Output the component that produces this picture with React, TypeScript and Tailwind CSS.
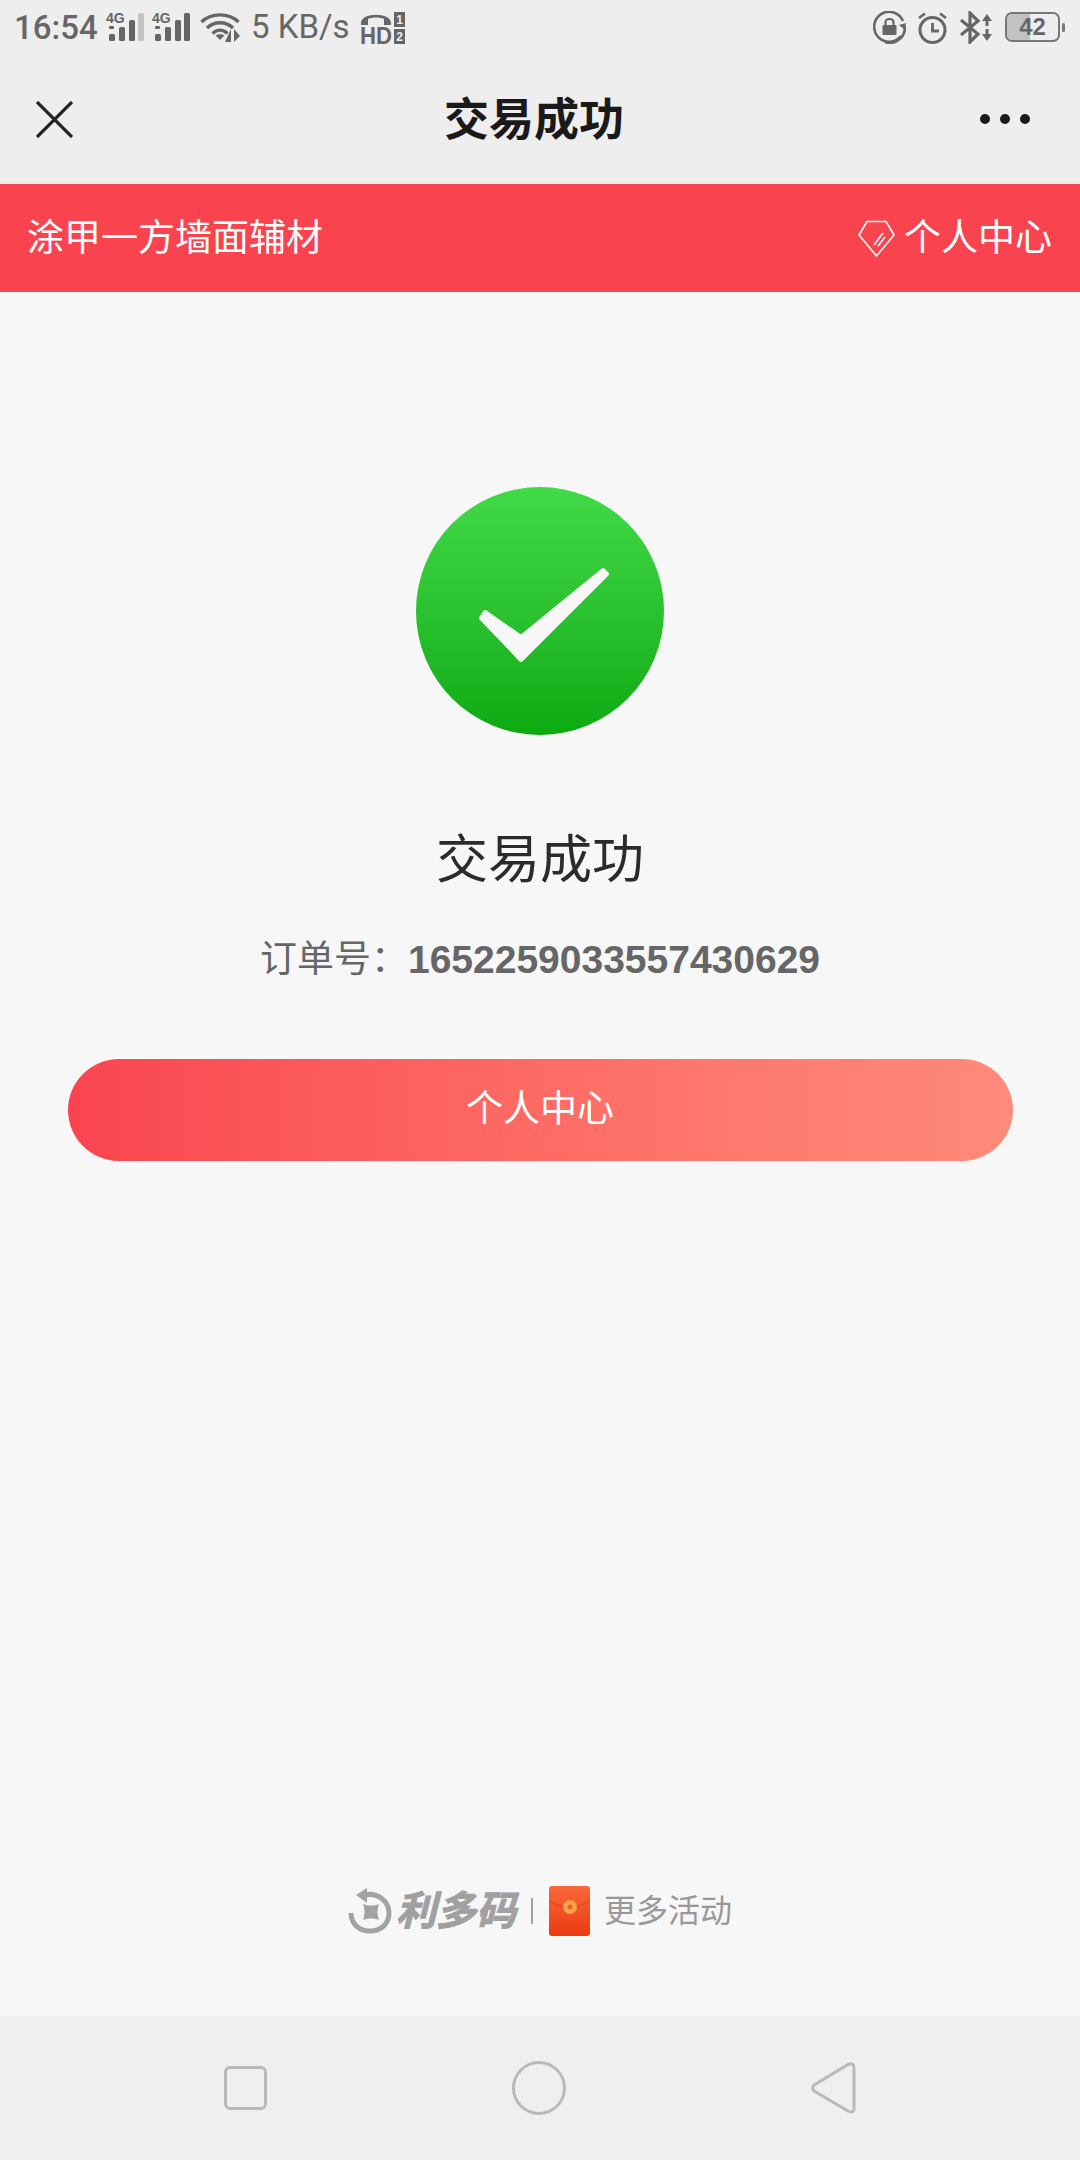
import React from "react";

const cjk = "font-['Liberation_Sans','Noto_Sans_CJK_SC',sans-serif]";

function Signal({ dim }: { dim?: boolean }) {
  return (
    <svg width="38" height="30" viewBox="0 0 38 30" className="block overflow-visible">
      <text x="0" y="11" fontSize="14" fontWeight="700" fill="#666" fontFamily="Liberation Sans, sans-serif">4G</text>
      <rect x="3" y="14" width="5" height="3" rx="1" fill="#666" />
      <rect x="3" y="22" width="6" height="7" rx="1.5" fill="#666" />
      <rect x="13" y="15" width="6" height="14" rx="1.5" fill="#666" />
      <rect x="23" y="8" width="6" height="21" rx="1.5" fill="#666" />
      <rect x="32" y="1" width="6" height="28" rx="1.5" fill={dim ? "#c4c4c4" : "#666"} />
    </svg>
  );
}

function Wifi() {
  return (
    <svg width="44" height="32" viewBox="0 0 44 32" className="block" fill="none" stroke="#666" strokeWidth="3.4">
      <path d="M1.5 11 C11 1.5 29 1.500 38.500 11" />
      <path d="M7 17 C14 10 26 10 33 17" />
      <path d="M12.500 22.500 C17 18 23 18 27.500 22.500" />
      <path d="M20 29 L15.500 24.500 C18 22.800 22 22.800 24.500 24.500 Z" fill="#666" stroke="none" />
      <path d="M31 18 V31 L25 31 Z" fill="#666" stroke="none" />
      <path d="M34 18 V31 L40 25 Z" fill="#666" stroke="none" />
    </svg>
  );
}

function Hd() {
  return (
    <svg width="45" height="33" viewBox="0 0 45 33" className="block overflow-visible">
      <path d="M1 12 C1 1 31 1 31 12 L31 14 L24 14 L24 8 C20 6 12 6 8 8 L8 14 L1 14 Z" fill="#666" />
      <text x="0" y="33" fontSize="24" fontWeight="700" fill="#666" textLength="32" lengthAdjust="spacingAndGlyphs" fontFamily="Liberation Sans, sans-serif">HD</text>
      <rect x="34" y="1" width="11" height="15" fill="#666" />
      <rect x="34" y="18" width="11" height="15" fill="#666" />
      <text x="39.500" y="13" fontSize="12" fontWeight="700" textAnchor="middle" fill="#eee" fontFamily="Liberation Sans, sans-serif">1</text>
      <text x="39.500" y="30" fontSize="12" fontWeight="700" textAnchor="middle" fill="#eee" fontFamily="Liberation Sans, sans-serif">2</text>
    </svg>
  );
}

function RotationLock() {
  return (
    <svg width="33" height="33" viewBox="0 0 33 33" className="block" fill="none" stroke="#666" strokeWidth="2.600">
      <path d="M28 25 A15 15 0 1 1 30 10" />
      <path d="M31.500 14 A15 15 0 0 1 12 31" />
      <path d="M26 14 L31 18 L33 12 Z" fill="#666" stroke="none" />
      <rect x="9.500" y="14" width="14" height="10" rx="1" fill="#666" stroke="none" />
      <path d="M12.500 14 V11.500 C12.500 6.800 20.500 6.800 20.500 11.500 V14" strokeWidth="2.200" />
    </svg>
  );
}

function Alarm() {
  return (
    <svg width="29" height="33" viewBox="0 0 29 33" className="block" fill="none" stroke="#666" strokeWidth="3">
      <circle cx="14.500" cy="19" r="12.500" />
      <path d="M14.500 12 V20 H21" strokeWidth="2.800" />
      <path d="M1 7 L7 2.500 M28 7 L22 2.500" strokeWidth="2.600" />
    </svg>
  );
}

function Bluetooth() {
  return (
    <svg width="34" height="33" viewBox="0 0 34 33" className="block" fill="none" stroke="#666" strokeWidth="3.200">
      <path d="M2 9 L19 23 L11 31 V2 L19 10 L2 24" />
      <path d="M28 3 L33 10 H23 Z" fill="#666" stroke="none" />
      <path d="M28 30 L33 23 H23 Z" fill="#666" stroke="none" />
      <rect x="26.500" y="9" width="3" height="6" fill="#666" stroke="none" />
      <rect x="26.500" y="18" width="3" height="6" fill="#666" stroke="none" />
    </svg>
  );
}

function Battery() {
  return (
    <div className="flex items-center">
      <div className="relative w-[55px] h-[30px] rounded-[7px] border-2 border-[#777] flex items-center justify-center">
        <div className="absolute left-0 top-0 bottom-0 w-[23px] rounded-l-[5px] bg-[#c2c2c2]" />
        <span className="relative font-['Liberation_Sans',sans-serif] font-bold text-[24px] leading-none text-[#666]">42</span>
      </div>
      <div className="ml-[2px] w-[3px] h-[9px] rounded-sm bg-[#777]" />
    </div>
  );
}

function Gem() {
  return (
    <svg width="37" height="37" viewBox="0 0 37 37" fill="none" stroke="#fff" strokeWidth="1.600" className="block">
      <path d="M9 1.500 H28 L36 15 L18.500 36 L1 15 Z" />
      <path d="M25 13 L16 25 M27 17 L20 26" />
    </svg>
  );
}

function Check() {
  return (
    <svg width="248" height="248" viewBox="0 0 248 248" className="block">
      <path d="M187 83 L191 87 L105 173 L65 131 L69 125 L105 150 Z" fill="#f7f7f7" strokeLinejoin="round" stroke="#f7f7f7" strokeWidth="4" />
    </svg>
  );
}

function LogoMark() {
  return (
    <svg width="44" height="46" viewBox="0 0 44 46" className="block" fill="none" stroke="#a3a3a3" strokeWidth="5">
      <path d="M16 7 C30 4 41 13 41 25 C41 36 33 43 22 43 C11 43 3 36 3 25" />
      <path d="M19 0 L8 7 L19 15 Z" fill="#a3a3a3" stroke="none" />
      <path d="M15 16 C20 18 26 18 31 16 C29 21 29 27 31 32 C26 30 20 30 15 32 C17 27 17 21 15 16 Z" fill="#a3a3a3" stroke="none" />
    </svg>
  );
}

function Envelope() {
  return (
    <svg width="41" height="50" viewBox="0 0 41 50" className="block">
      <defs>
        <linearGradient id="env" x1="0" y1="0" x2="0" y2="1">
          <stop offset="0" stopColor="#f8693a" />
          <stop offset="1" stopColor="#ec3a12" />
        </linearGradient>
      </defs>
      <rect width="41" height="50" rx="3" fill="url(#env)" />
      <path d="M0 15 Q20 28 41 15" fill="none" stroke="#d8431a" strokeWidth="1" />
      <circle cx="21" cy="21" r="7" fill="#f7a34c" />
      <circle cx="21" cy="21" r="2.500" fill="#e8641f" />
    </svg>
  );
}

export default function App() {
  return (
    <div className={`w-[1080px] h-[2160px] flex flex-col bg-[#f7f7f7] overflow-hidden ${cjk}`}>
      <div className="h-[184px] bg-[#eeeeee] flex flex-col">
        <div className="h-[54px] pl-[14px] pr-[15px] flex items-center justify-between">
          <div className="flex items-center">
            <span className="font-['Roboto',sans-serif] font-medium text-[33px] leading-none text-[#666] w-[92px]">16:54</span>
            <Signal dim />
            <div className="w-[8px]" />
            <Signal />
            <div className="w-[10px]" />
            <Wifi />
            <span className="ml-[7px] w-[109px] font-['Roboto',sans-serif] text-[33px] leading-[40px] text-[#666] whitespace-nowrap">5 KB/s</span>
            <Hd />
          </div>
          <div className="flex items-center">
            <RotationLock />
            <div className="w-[12px]" />
            <Alarm />
            <div className="w-[12px]" />
            <Bluetooth />
            <div className="w-[12px]" />
            <Battery />
          </div>
        </div>
        <div className="relative flex-1 flex items-center justify-center pr-[12px] pt-[2px]">
          <svg width="37" height="37" viewBox="0 0 37 37" className="absolute left-[36px] top-[47px]" stroke="#222" strokeWidth="3.200" fill="none">
            <path d="M1 1 L36 36 M36 1 L1 36" />
          </svg>
          <span className="text-[45px] leading-none font-bold text-[#1a1a1a]">交易成功</span>
          <div className="absolute left-[980px] top-[60px] flex gap-[10px]">
            <div className="w-[10px] h-[10px] rounded-full bg-[#1a1a1a]" />
            <div className="w-[10px] h-[10px] rounded-full bg-[#1a1a1a]" />
            <div className="w-[10px] h-[10px] rounded-full bg-[#1a1a1a]" />
          </div>
        </div>
      </div>

      <div className="h-[108px] bg-[#f9444f] pl-[27px] pr-[28px] flex items-center justify-between text-white text-[37px] leading-none">
        <span>涂甲一方墙面辅材</span>
        <div className="flex items-center gap-[9px]">
          <Gem />
          <span>个人中心</span>
        </div>
      </div>

      <div className="flex-1 flex flex-col items-center pt-[195px]">
        <div className="w-[248px] h-[248px] rounded-full bg-gradient-to-b from-[#42da47] to-[#0aaa10]">
          <Check />
        </div>
        <div className="mt-[96px] text-[52px] leading-[58px] text-[#2b2b2b]">交易成功</div>
        <div className="mt-[49px] text-[37px] leading-[44px] text-[#666] flex items-center">
          <span>订单号：</span>
          <span className="font-bold text-[39px]">1652259033557430629</span>
        </div>
        <div className="mt-[77px] w-[945px] h-[102px] rounded-full bg-gradient-to-r from-[#f9444f] to-[#ff8b7a] flex items-center justify-center text-white text-[37px]">
          个人中心
        </div>
        <div className="mt-auto mb-[80px] flex items-center text-[#999] h-[50px]">
          <LogoMark />
          <span className="ml-[4px] text-[40px] leading-none font-bold italic text-[#a0a0a0] [-webkit-text-stroke:1px_#a0a0a0] w-[122px]">利多码</span>
          <div className="ml-[13px] w-[2px] h-[26px] bg-[#a3a3a3]" />
          <div className="ml-[16px]"><Envelope /></div>
          <span className="ml-[14px] text-[32px] leading-none">更多活动</span>
        </div>
      </div>

      <div className="h-[144px] bg-[#efefef] px-[224px] flex items-center justify-between">
        <div className="w-[43px] h-[44px] rounded-[6px] border-[3px] border-[#b9b9b9]" />
        <div className="w-[54px] h-[54px] rounded-full border-[3px] border-[#b9b9b9]" />
        <svg width="45" height="52" viewBox="0 0 45 52" fill="none" stroke="#b9b9b9" strokeWidth="3" strokeLinejoin="round" className="block">
          <path d="M3 23 L37 2.500 Q43 0 43 6 V46 Q43 52 37 49 L3 29 Q0 26 3 23 Z" />
        </svg>
      </div>
    </div>
  );
}
